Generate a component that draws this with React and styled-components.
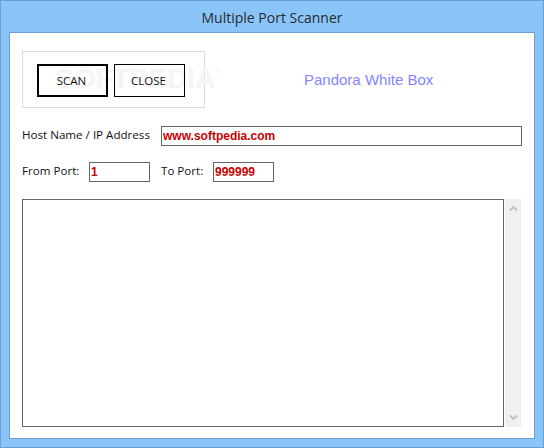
import React from "react";
import styled, { createGlobalStyle } from "styled-components";

const GlobalStyle = createGlobalStyle`
    html, body { margin: 0; padding: 0; background: #8ac5fa; }
    * { box-sizing: border-box; }
`;

const Frame = styled.div`
    width: 544px; height: 448px;
    display: flex; flex-direction: column;
    background: #8ac5fa;
    border: 1px solid #6f9fce;
    padding: 0 8px 8px 8px;
    font-family: "Open Sans", "Liberation Sans", sans-serif;
`;

const TitleBar = styled.div`
    height: 31px;
    flex: none;
    display: flex; align-items: center; justify-content: center;
    font-size: 14px;
    color: #2b2b2b;
    padding-top: 1px;
`;

const Client = styled.div`
    flex: 1;
    background: #fff;
    border: 1px solid #6f9fce;
    display: flex; flex-direction: column;
    padding: 18px 12px 11px 12px;
`;

const TopRow = styled.div`
    display: flex; align-items: center;
    height: 57px;
`;

const ButtonGroup = styled.div`
    position: relative;
    width: 183px; height: 57px;
    border: 1px solid #dcdcdc;
    display: flex; gap: 6px;
    padding: 12px 0 0 14px;
`;

const Watermark = styled.span`
    position: absolute;
    left: 32px; top: 11px;
    font-family: "Liberation Sans", sans-serif;
    font-size: 28px;
    font-weight: 700;
    color: #f5f5f5;
    white-space: nowrap;
    pointer-events: none;

    sup { font-size: 9px; font-weight: 400; vertical-align: 14px; line-height: 0; }
`;

const Button = styled.button`
    position: relative;
    width: 71px; height: 33px;
    background: transparent;
    border: ${(p) => (p.$active ? "2px" : "1px")} solid #000;
    padding: 0 2px 0 0;
    font-family: "Open Sans", "Liberation Sans", sans-serif;
    font-size: 11.5px;
    color: #111;
`;

const Brand = styled.div`
    margin-left: 99px;
    font-family: "Liberation Sans", sans-serif;
    font-size: 15px;
    color: #8585ff;
`;

const HostRow = styled.div`
    display: flex; align-items: center;
    margin-top: 18px;
    height: 20px;
`;

const PortRow = styled.div`
    display: flex; align-items: center;
    margin-top: 16px;
    height: 20px;
`;

const Label = styled.label`
    width: ${(p) => p.$w}px;
    flex: none;
    font-size: 11.6px;
    line-height: 16px;
    padding-bottom: 2px;
    color: #111;
    white-space: nowrap;
`;

const Field = styled.input`
    width: ${(p) => p.$w}px;
    height: 20px;
    flex: none;
    border: 1px solid #666;
    outline: none;
    padding: 0 1px;
    margin-right: ${(p) => p.$mr || 0}px;
    font-family: "Liberation Sans", sans-serif;
    font-size: 12px;
    font-weight: 700;
    color: #c80000;
`;

const OutputRow = styled.div`
    flex: 1;
    display: flex; gap: 1px;
    margin-top: 17px;
`;

const Output = styled.div`
    width: 482px;
    border: 1px solid #666;
`;

const ScrollBar = styled.div`
    width: 16px;
    background: #f0f0f0;
    display: flex; flex-direction: column; justify-content: space-between; align-items: center;
    padding: 6px 0;
`;

const Chevron = ({ down }) => (
    <svg width="9" height="7" viewBox="0 0 9 7">
        <path d={down ? "M1 1.5 L4.5 5 L8 1.5" : "M1 5.5 L4.5 2 L8 5.5"} fill="none" stroke="#c2c2c2" strokeWidth="2" />
    </svg>
);

const App = () => (
    <>
        <GlobalStyle />
        <Frame>
            <TitleBar>Multiple Port Scanner</TitleBar>
            <Client>
                <TopRow>
                    <ButtonGroup>
                        <Watermark>SOFTPEDIA<sup>®</sup></Watermark>
                        <Button $active>SCAN</Button>
                        <Button>CLOSE</Button>
                    </ButtonGroup>
                    <Brand>Pandora White Box</Brand>
                </TopRow>
                <HostRow>
                    <Label $w={139}>Host Name / IP Address</Label>
                    <Field $w={361} defaultValue="www.softpedia.com" />
                </HostRow>
                <PortRow>
                    <Label $w={67}>From Port:</Label>
                    <Field $w={61} $mr={11} defaultValue="1" />
                    <Label $w={52}>To Port:</Label>
                    <Field $w={61} defaultValue="999999" />
                </PortRow>
                <OutputRow>
                    <Output />
                    <ScrollBar>
                        <Chevron />
                        <Chevron down />
                    </ScrollBar>
                </OutputRow>
            </Client>
        </Frame>
    </>
);

export default App;
